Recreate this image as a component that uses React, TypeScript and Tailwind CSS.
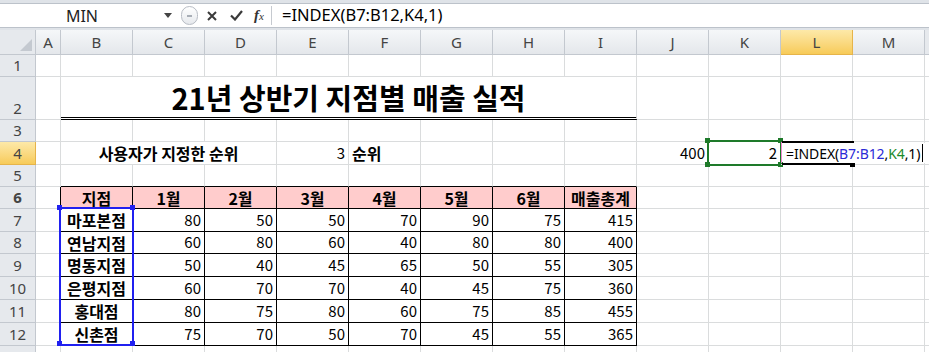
import React from "react";

// sheet data
const branches: [string, number, number, number, number, number, number, number][] = [
  ["마포본점", 80, 50, 50, 70, 90, 75, 415],
  ["연남지점", 60, 80, 60, 40, 80, 80, 400],
  ["명동지점", 50, 40, 45, 65, 50, 55, 305],
  ["은평지점", 60, 70, 70, 40, 45, 75, 360],
  ["홍대점", 80, 75, 80, 60, 75, 85, 455],
  ["신촌점", 75, 70, 50, 70, 45, 55, 365],
];
const months = ["1월", "2월", "3월", "4월", "5월", "6월"];
const cols = ["A", "B", "C", "D", "E", "F", "G", "H", "I", "J", "K", "L", "M"];

const RC = { grid: "border-r-[#dadcdd]", black: "border-r-black" };
const BC = { grid: "border-b-[#dadcdd]", black: "border-b-black" };

type CellProps = {
  w?: string;
  r?: "grid" | "black";
  b?: "grid" | "black";
  className?: string;
  children?: React.ReactNode;
};

function Cell({ w = "w-[72px]", r = "grid", b = "grid", className = "", children }: CellProps) {
  return (
    <div
      className={`shrink-0 h-full border-r border-b flex items-center ${RC[r]} ${BC[b]} ${w} ${className}`}
    >
      {children}
    </div>
  );
}

function RowHead({ n, active = false }: { n?: number; active?: boolean }) {
  return (
    <div
      className={`shrink-0 w-[36px] h-full border-r border-b flex items-end justify-center pb-[1px] text-[15px] leading-[20px] text-[#444] font-['Noto_Sans',sans-serif] ${
        active
          ? "bg-linear-to-b from-[#fde9a8] to-[#f7cb58] border-[#e6b44a]"
          : "bg-[#e6e9ed] border-[#c3c8cf]"
      }`}
    >
      {n}
    </div>
  );
}

const Tail = () => <div className="shrink-0 w-[4px] h-full border-b border-b-[#dadcdd]" />;

function BlankRow({ n, h }: { n?: number; h: string }) {
  return (
    <div className={`flex ${h}`}>
      <RowHead n={n} />
      {cols.map((c) => (
        <Cell key={c} w={c === "A" ? "w-[25px]" : "w-[72px]"} />
      ))}
      <Tail />
    </div>
  );
}

function FormulaBar() {
  return (
    <div className="h-[30px] bg-[#dfe3e8] pt-[3px] pb-[2px]">
      <div className="h-[25px] bg-white border-y border-[#bcc2ca] flex items-center font-['Noto_Sans',sans-serif]">
        <div className="w-[178px] h-full flex items-center">
          <span className="w-[164px] text-center text-[16px] text-[#222]">MIN</span>
          <svg width="8" height="5" viewBox="0 0 8 5">
            <path d="M0 0h8L4 5z" fill="#444" />
          </svg>
        </div>
        <div className="w-[22px] h-full flex items-center">
          <div className="ml-[3px] w-[17px] h-[19px] rounded-full border border-[#b7bcc4] bg-linear-to-b from-white to-[#e6e9ed] flex items-center justify-center">
            <div className="w-[5px] h-[2px] bg-[#a8aeb6]" />
          </div>
        </div>
        <div className="w-[24px] flex justify-center">
          <svg width="10" height="10" viewBox="0 0 10 10">
            <path d="M1 1l8 8M9 1l-8 8" stroke="#3a3a3a" strokeWidth="2" />
          </svg>
        </div>
        <div className="w-[24px] flex justify-center">
          <svg width="13" height="11" viewBox="0 0 13 11">
            <path d="M1 5.5l4 4L12 1" stroke="#3a3a3a" strokeWidth="2.2" fill="none" />
          </svg>
        </div>
        <div className="w-[22px] flex justify-center font-['Liberation_Serif',serif] italic text-[#333]">
          <span className="text-[15px] font-bold">f</span>
          <span className="text-[11px] mt-[4px]">x</span>
        </div>
        <div className="ml-[1px] w-px h-[19px] bg-[#c6cad0]" />
        <span className="pl-[10px] text-[16.5px] text-black">=INDEX(B7:B12,K4,1)</span>
      </div>
    </div>
  );
}

function ColHeaders() {
  return (
    <div className="flex h-[25px] font-['Noto_Sans',sans-serif] text-[15px] text-[#444]">
      <div className="shrink-0 w-[36px] h-full border-r border-b border-[#c3c8cf] bg-[#e6e9ed] flex items-end justify-end">
        <svg width="12" height="12" viewBox="0 0 12 12" className="mr-[3px] mb-[3px]">
          <path d="M12 0v12H0z" fill="#c4c9d0" />
        </svg>
      </div>
      {cols.map((c) => (
        <div
          key={c}
          className={`shrink-0 h-full border-r border-b flex items-center justify-center ${
            c === "A" ? "w-[25px]" : "w-[72px]"
          } ${
            c === "L"
              ? "bg-linear-to-b from-[#fde9a8] to-[#f7cb58] border-[#e6b44a]"
              : "bg-linear-to-b from-[#f5f7f9] to-[#e4e7eb] border-[#c3c8cf]"
          }`}
        >
          {c}
        </div>
      ))}
      <div className="shrink-0 w-[4px] h-full border-b border-[#c3c8cf] bg-[#e6e9ed]" />
    </div>
  );
}

const kr = "font-['Malgun_Gothic','Noto_Sans_CJK_KR',sans-serif]";

export default function App() {
  return (
    <div className={`w-[929px] h-[352px] overflow-hidden bg-white ${kr} text-black`}>
      <FormulaBar />
      <ColHeaders />

      <BlankRow n={1} h="h-[22px]" />

      {/* title row */}
      <div className="flex h-[43px]">
        <RowHead n={2} />
        <Cell w="w-[25px]" />
        <Cell
          w="w-[576px]"
          b="black"
          className="border-b-[3px] border-double justify-center items-end pb-[3px]"
        >
          <span className="text-[29px] font-bold leading-[34px]">21년 상반기 지점별 매출 실적</span>
        </Cell>
        {cols.slice(9).map((c) => (
          <Cell key={c} />
        ))}
        <Tail />
      </div>

      <BlankRow n={3} h="h-[22px]" />

      {/* rank input row */}
      <div className="flex h-[23px] text-[15px]">
        <RowHead n={4} active />
        <Cell w="w-[25px]" />
        <Cell w="w-[216px]" className="justify-center font-bold text-[16px]">
          사용자가 지정한 순위
        </Cell>
        <Cell className="justify-end pr-[3px]">3</Cell>
        <Cell className="pl-[3px] font-bold text-[16px]">순위</Cell>
        <Cell />
        <Cell />
        <Cell />
        <Cell className="justify-end pr-[3px]">400</Cell>
        <Cell className="relative justify-end pr-[3px]">
          2
          <div className="absolute left-[-2px] top-[-2px] w-[75px] h-[26px] border-2 border-[#1e7a2a]" />
          <div className="absolute left-[-4px] top-[-4px] size-[5px] bg-[#1e7a2a]" />
          <div className="absolute right-[-3px] top-[-4px] size-[5px] bg-[#1e7a2a]" />
          <div className="absolute left-[-4px] bottom-[-3px] size-[5px] bg-[#1e7a2a]" />
          <div className="absolute right-[-3px] bottom-[-3px] size-[5px] bg-[#1e7a2a]" />
        </Cell>
        <Cell className="relative">
          <div className="absolute left-0 top-0 w-px h-[21px] bg-[#f08ad0]" />
          <div className="absolute left-[1px] top-[-1px] w-[72px] h-[2px] bg-black" />
          <div className="absolute left-[1px] top-[21px] w-[72px] h-[2px] bg-black" />
          <div className="absolute left-[69px] top-[20px] size-[5px] bg-black" />
          <div className="absolute left-[2px] top-[1px] z-10 w-[145px] h-[20px] bg-white flex items-center pl-[3px] font-['Noto_Sans',sans-serif] text-[14px] tracking-[-0.1px] whitespace-nowrap">
            <span>=INDEX(</span>
            <span className="text-[#2b2bd6]">B7:B12</span>
            <span>,</span>
            <span className="text-[#1b8a2a]">K4</span>
            <span>,1)</span>
            <span className="ml-[2px] w-px h-[18px] bg-black" />
          </div>
        </Cell>
        <Cell />
        <Tail />
      </div>

      {/* row 5: top edge of the table */}
      <div className="flex h-[22px]">
        <RowHead n={5} />
        <Cell w="w-[25px]" />
        {cols.slice(1, 9).map((c) => (
          <Cell key={c} b="black" />
        ))}
        {cols.slice(9).map((c) => (
          <Cell key={c} />
        ))}
        <Tail />
      </div>

      {/* table header */}
      <div className="flex h-[22px] text-[16px] font-bold">
        <RowHead n={6} />
        <Cell w="w-[25px]" r="black" />
        <Cell r="black" b="black" className="justify-center bg-[#ffcccc]">
          지점
        </Cell>
        {months.map((m) => (
          <Cell key={m} r="black" b="black" className="justify-center bg-[#ffcccc]">
            {m}
          </Cell>
        ))}
        <Cell r="black" b="black" className="justify-center bg-[#ffcccc]">
          매출총계
        </Cell>
        {cols.slice(9).map((c) => (
          <Cell key={c} />
        ))}
        <Tail />
      </div>

      {/* table body */}
      {branches.map((row, i) => (
        <div key={row[0]} className={`flex text-[15px] ${i === 1 ? "h-[22px]" : "h-[23px]"}`}>
          <RowHead n={7 + i} />
          <Cell w="w-[25px]" r="black" />
          <Cell r="black" b="black" className="relative justify-center font-bold text-[16px]">
            {row[0]}
            {i === 0 && (
              <>
                <div className="absolute left-[-2px] top-[-2px] w-[75px] h-[139px] border-2 border-[#2020f0] z-10" />
                <div className="absolute left-[-4px] top-[-4px] size-[5px] bg-[#2020f0] z-10" />
                <div className="absolute left-[69px] top-[-4px] size-[5px] bg-[#2020f0] z-10" />
                <div className="absolute left-[-4px] top-[132px] size-[5px] bg-[#2020f0] z-10" />
                <div className="absolute left-[69px] top-[132px] size-[5px] bg-[#2020f0] z-10" />
              </>
            )}
          </Cell>
          {row.slice(1).map((v, j) => (
            <Cell key={j} r="black" b="black" className="justify-end pr-[3px]">
              {v}
            </Cell>
          ))}
          {cols.slice(9).map((c) => (
            <Cell key={c} />
          ))}
          <Tail />
        </div>
      ))}

      <BlankRow h="h-[23px]" />
    </div>
  );
}
